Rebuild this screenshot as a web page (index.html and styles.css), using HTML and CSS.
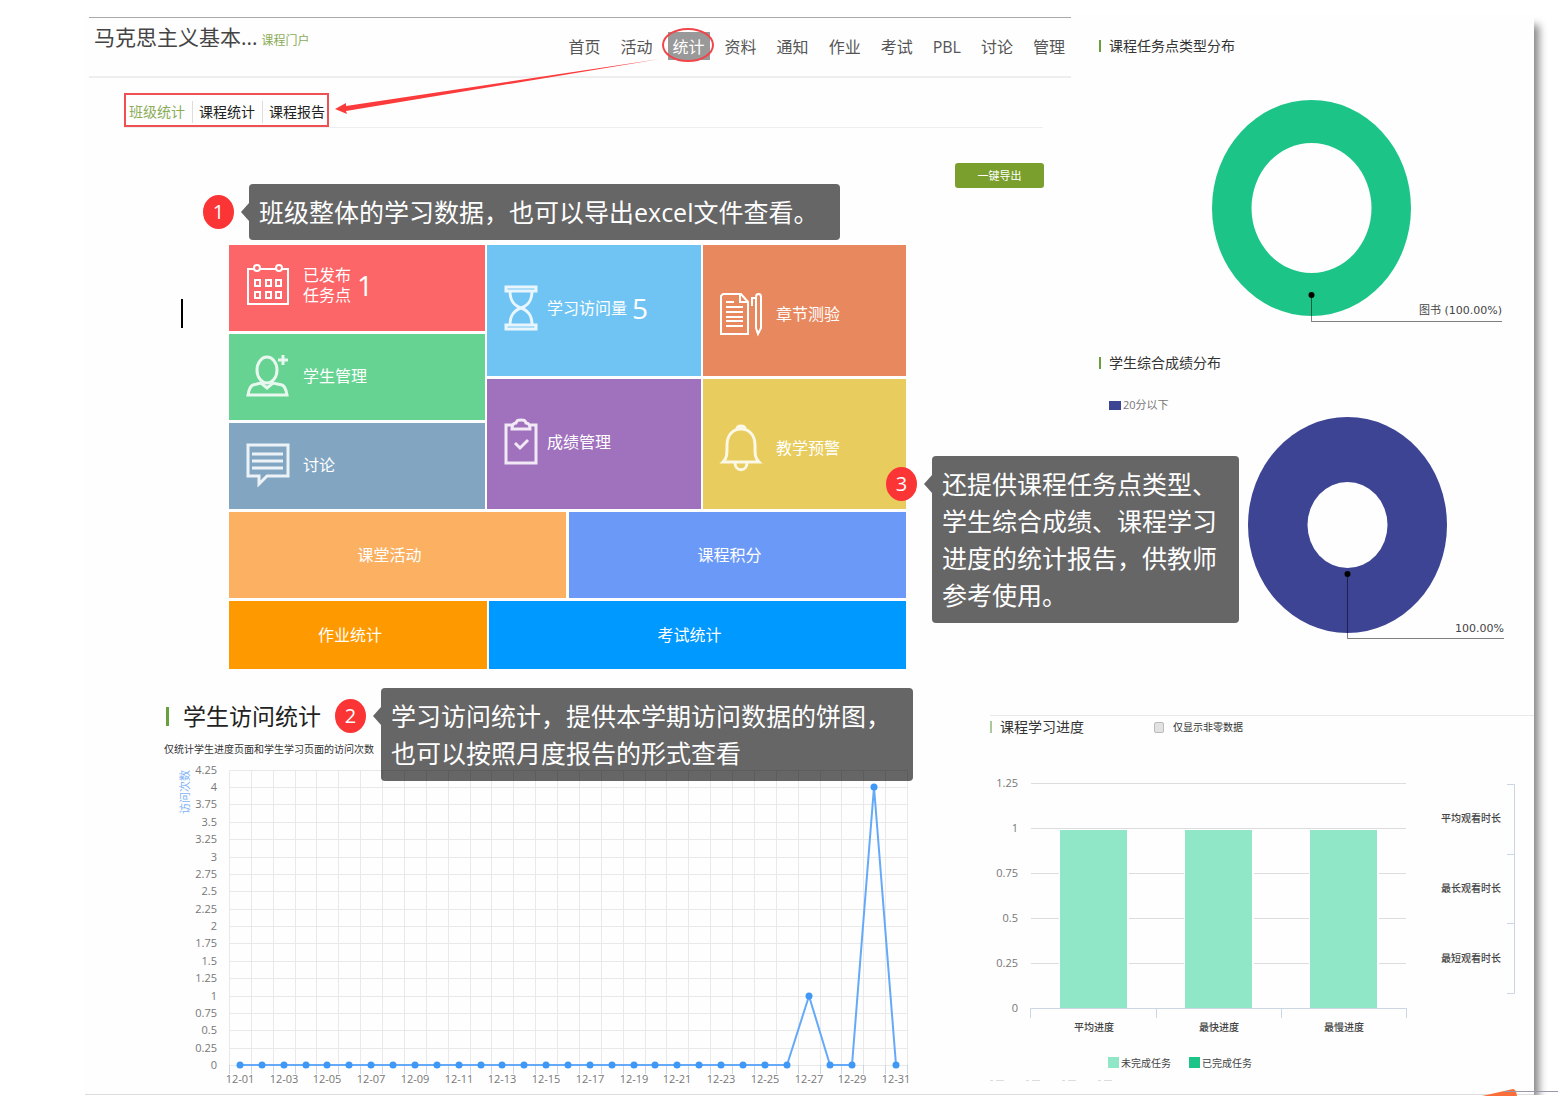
FILE: index.html
```html
<!DOCTYPE html>
<html lang="zh-CN">
<head>
<meta charset="utf-8">
<meta name="viewport" content="width=device-width, initial-scale=1">
<title>班级统计</title>
<link rel="stylesheet" href="styles.css">
</head>
<body>
<main class="slide">
  <div class="top">
    <section class="course">
      <header class="header">
        <h1 class="course-name">马克思主义基本...<a class="portal" href="#">课程门户</a></h1>
        <nav class="nav">
          <a href="#">首页</a>
          <a href="#">活动</a>
          <a href="#" class="active">统计</a>
          <a href="#">资料</a>
          <a href="#">通知</a>
          <a href="#">作业</a>
          <a href="#">考试</a>
          <a href="#">PBL</a>
          <a href="#">讨论</a>
          <a href="#">管理</a>
        </nav>
      </header>
      <div class="tabs-row">
        <nav class="tabs">
          <a href="#" class="current">班级统计</a>
          <a href="#">课程统计</a>
          <a href="#">课程报告</a>
        </nav>
      </div>
      <div class="actions"><button class="export" type="button">一键导出</button></div>
      <div class="board">
        <span class="caret"></span>
        <div class="tiles">
          <div class="stack">
            <a href="#" class="tile red">
              <svg class="icon" viewBox="0 0 42 42" width="42" height="42"><path d="M7 5H1v35h40V5h-6M13 5h16"/><circle cx="10" cy="4" r="3"/><circle cx="32" cy="4" r="3"/><path d="M8 16h5v6H8zM19 16h5v6h-5zM29 16h5v6h-5zM8 28h5v6H8zM19 28h5v6h-5zM29 28h5v6h-5z"/></svg>
              <span class="lines">已发布<br>任务点</span><b>1</b>
            </a>
            <a href="#" class="tile green">
              <svg class="icon" viewBox="0 0 42 42" width="42" height="42"><ellipse cx="20" cy="15" rx="10" ry="13"/><path d="M36 0v10M31 5h10M1 40c1-6 2-9 5-10l8-2 6 5 6-5 9 2c3 1 4 4 5 10z"/></svg>
              <span>学生管理</span>
            </a>
            <a href="#" class="tile steel">
              <svg class="icon" viewBox="0 0 42 42" width="42" height="42"><path d="M1 1h40v31H20l-8 8v-8H1zM5 10h31M5 17h31M5 24h31"/></svg>
              <span>讨论</span>
            </a>
          </div>
          <div class="stack middle">
            <a href="#" class="tile sky">
              <svg class="icon" viewBox="0 0 32 44" width="32" height="44"><path d="M1 1h30v4H1zM1 39h30v4H1zM5 5c0 9 3 14 11 17C8 25 5 30 5 39M27 5c0 9-3 14-11 17 8 3 11 8 11 17"/></svg>
              <span>学习访问量</span><b>5</b>
            </a>
            <a href="#" class="tile purple">
              <svg class="icon" viewBox="0 0 32 46" width="32" height="46"><path d="M7 6H1v38h30V6h-6M7 10c0-5 2-6 4-6 1-3 2-3 5-3s4 0 5 3c3 0 4 2 4 6zM10 24l5 5 8-8"/></svg>
              <span>成绩管理</span>
            </a>
          </div>
          <div class="stack right">
            <a href="#" class="tile coral">
              <svg class="icon" viewBox="0 0 42 42" width="42" height="42"><path d="M3 1h18l7 8v32H1V3zM20 1v8h8M6 9h8M6 14h17M6 19h17M6 24h17M6 28h17M6 33h17M36 4c0-4 5-4 5 0v31l-3 6-2-6zM36 5h-4v8"/></svg>
              <span>章节测验</span>
            </a>
            <a href="#" class="tile gold">
              <svg class="icon" viewBox="0 0 42 46" width="42" height="46"><path d="M3 37h36c-4-4-4-7-4-17 0-9-5-16-14-16S7 11 7 20c0 10 0 13-4 17zM15 38c0 9 12 9 12 0M17 4c0-4 8-4 8 0"/></svg>
              <span>教学预警</span>
            </a>
          </div>
          <a href="#" class="tile wide apricot">课堂活动</a>
          <a href="#" class="tile wide periwinkle">课程积分</a>
          <a href="#" class="tile wide orange">作业统计</a>
          <a href="#" class="tile wide azure">考试统计</a>
        </div>
      </div>
    </section>
    <section class="reports">
      <h2 class="heading">课程任务点类型分布</h2>
      <svg class="chart" viewBox="0 0 463 280">
        <ellipse cx="240.500" cy="148" rx="99.500" ry="108" fill="#1cc587"/>
        <ellipse cx="240.500" cy="148" rx="60" ry="65" fill="#fefefe"/>
        <path class="leader" d="M240.500 235v26.500H431"/>
        <circle cx="240.500" cy="235" r="3"/>
        <text class="value" x="431" y="254" text-anchor="end">图书 (100.00%)</text>
      </svg>
      <h2 class="heading">学生综合成绩分布</h2>
      <p class="score-legend"><i></i>20分以下</p>
      <svg class="chart" viewBox="0 0 463 240">
        <ellipse cx="276.500" cy="113" rx="99.500" ry="108" fill="#3d4493"/>
        <ellipse cx="276.500" cy="113" rx="40" ry="43" fill="#fefefe"/>
        <path class="leader" d="M276.500 162v64.500H433"/>
        <circle cx="276.500" cy="162" r="3"/>
        <text class="value" x="433" y="220" text-anchor="end">100.00%</text>
      </svg>
    </section>
  </div>
  <div class="bottom">
    <section class="visits">
      <h2 class="heading large">学生访问统计</h2>
      <p class="hint">仅统计学生进度页面和学生学习页面的访问次数</p>
      <svg id="visits" class="chart" viewBox="0 0 748 334"></svg>
    </section>
    <section class="progress">
      <div class="progress-head">
        <h2 class="heading">课程学习进度</h2>
        <label class="filter"><input type="checkbox">仅显示非零数据</label>
      </div>
      <svg id="progress" class="chart" viewBox="0 0 544 334"></svg>
    </section>
  </div>

  <svg class="pointer" viewBox="0 0 600 110" width="600" height="110">
    <ellipse cx="563" cy="31" rx="25" ry="16" fill="none" stroke="#f0464a" stroke-width="2"/>
    <path fill="#fb3b3b" d="M210 95l11-6v3L535 45 221 97l1 3z"/>
  </svg>
  <aside class="note note-1"><span class="badge">1</span><p>班级整体的学习数据，也可以导出excel文件查看。</p></aside>
  <aside class="note note-2"><span class="badge">2</span><p>学习访问统计，提供本学期访问数据的饼图，<br>也可以按照月度报告的形式查看</p></aside>
  <aside class="note note-3"><span class="badge">3</span><p>还提供课程任务点类型、<br>学生综合成绩、课程学习<br>进度的统计报告，供教师<br>参考使用。</p></aside>
</main>
<svg class="corner" viewBox="0 0 76 8" width="76" height="8"><path fill="#fb6e3a" d="M0 8l31-7q3 0 4 7z"/><path stroke="#99a" d="M22 3.500H76"/></svg>
<script src="script.js"></script>
</body>
</html>
```
FILE: styles.css
```css
* { box-sizing: border-box; }
body {
  margin: 0;
  background: #fff;
  color: #333;
  font: 14px/20px "Open Sans", "Noto Sans CJK SC", sans-serif;
}
h1, h2, p { margin: 0; font-weight: 400; }
a { color: inherit; text-decoration: none; }

.slide {
  position: relative;
  margin: 14px 24px 0 85px;
  padding: 3px 0 0 4px;
  background: #fefefe;
  border-bottom: 1px solid #ddd;
  box-shadow: 8px 8px 8px -3px #888;
}
.top { display: grid; grid-template-columns: 982fr 463fr; min-height: 683px; }
.bottom { display: grid; grid-template-columns: 901fr 544fr; }

.header {
  display: flex;
  justify-content: space-between;
  height: 61px;
  border-top: 1px solid #aaa;
  border-bottom: 2px solid #eee;
}
.course-name { padding: 4px 0 0 5px; font-size: 21px; line-height: 30px; color: #444; }
.portal { margin-left: 4px; font-size: 12px; color: #8bac58; }
.nav { display: flex; gap: 10px; padding: 14px 1px 0 0; font-size: 16px; color: #555; }
.nav a { height: 28px; padding: 0 5px; line-height: 30px; }
.nav .active { background: #999; color: #fff; }

.tabs-row { display: flex; margin: 15px 28px 0 35px; border-bottom: 1px solid #eee; }
.tabs { display: flex; padding: 6px 2px 2px 3px; border: 2px solid #ee5053; line-height: 22px; color: #222; }
.tabs a { padding-right: 7px; }
.tabs a + a { padding-left: 6px; border-left: 1px solid #ddd; }
.tabs a:last-child { padding-right: 0; }
.tabs .current { color: #8bac58; }

.actions { display: flex; justify-content: flex-end; padding: 35px 27px 57px 0; }
.export {
  width: 89px;
  height: 25px;
  border: 0;
  border-radius: 3px;
  background: #7a9f2d;
  color: #fff;
  font: 11px/20px "Open Sans", "Noto Sans CJK SC", sans-serif;
}

.board { display: flex; padding: 0 165px 0 92px; }
.caret { width: 2px; height: 29px; margin: 54px 46px 0 0; background: #000; }
.tiles { flex: 1; display: grid; grid-template-columns: repeat(677, minmax(0, 1fr)); row-gap: 3px; }
.stack { display: grid; grid-auto-rows: minmax(0, 1fr); gap: 3px; height: 264px; grid-column: 1 / 257; }
.stack.middle { grid-column: 259 / 473; }
.stack.right { grid-column: 475 / 678; }
.tile { display: flex; align-items: center; gap: 14px; padding: 0 18px 2px; color: #fff; font-size: 16px; }
.tile b { margin-left: -8px; font-size: 28px; font-weight: 400; }
.tile.red { padding-bottom: 6px; }
.tile .lines { line-height: 20px; }
.middle .tile { gap: 10px; padding-bottom: 4px; }
.middle .tile b { margin-left: -5px; }
.right .tile { padding: 8px 17px 0; }
.icon { flex: none; fill: none; stroke: #fff; stroke-width: 3; opacity: .85; overflow: visible; }
.coral .icon, .red .icon { stroke-width: 2; opacity: 1; }
.wide { justify-content: center; height: 86px; padding: 0 16px 0 0; }
.red { background: #fc6668; }
.green { background: #67d393; }
.steel { background: #82a6c2; }
.sky { background: #70c4f4; }
.purple { background: #a071bd; }
.coral { background: #e8885e; }
.gold { background: #e8cd5e; }
.apricot { grid-column: 1 / 338; background: #fbb062; }
.periwinkle { grid-column: 341 / 678; background: #6b99f7; }
.orange { grid-column: 1 / 259; height: 68px; background: #ff9900; }
.azure { grid-column: 261 / 678; height: 68px; background: #0099ff; }

.heading { display: flex; align-items: center; gap: 8px; font-size: 14px; line-height: 22px; color: #333; }
.heading::before { content: ""; width: 2px; height: 12px; background: #67a03c; }
.heading.large { gap: 14px; font-size: 23px; line-height: 32px; color: #222; }
.heading.large::before { width: 3px; height: 19px; }
.chart { display: block; width: 100%; height: auto; overflow: visible; }

.reports { padding-top: 18px; }
.reports .heading { padding-left: 28px; }
.reports .chart { margin: 3px 0 12px; }
.score-legend { display: flex; align-items: center; gap: 2px; padding: 21px 0 0 38px; font-size: 11px; line-height: 20px; color: #777; }
.score-legend i { width: 12px; height: 9px; background: #3d4493; }
.reports .score-legend + .chart { margin: -3px 0 0; }

.visits { padding: 0 78px 0 75px; }
.visits .heading { padding-left: 2px; }
.hint { padding-top: 7px; font-size: 10px; line-height: 21px; }
.progress { margin-top: 15px; border-top: 1px solid #e8e8e8; }
.progress-head { display: flex; align-items: flex-start; gap: 70px; height: 44px; }
.progress .heading::before { background: #a9c99a; }
.filter { display: flex; align-items: center; gap: 9px; height: 22px; font-size: 10px; }
.filter input {
  appearance: none;
  width: 10px;
  height: 11px;
  margin: 0;
  border: 1px solid #bbb;
  border-radius: 2px;
  background: #e2e2e2;
}

.chart text { font-size: 11px; fill: #777; }
.chart text.value { font-family: "DejaVu Sans", "Noto Sans CJK SC", sans-serif; fill: #444; }
.chart text.cat { font-size: 10px; font-weight: 500; fill: #444; }
.chart text.key { font-size: 10px; fill: #444; }
.chart text.axis-title { fill: #7fb3f7; }
.leader { fill: none; stroke: #000; stroke-opacity: .5; }
.grid { fill: none; stroke: #e9e9e9; }
.grid.dark { stroke: #ddd; }
.axis { fill: none; stroke: #ccd6e2; }
.series { fill: none; stroke: #64aaf8; stroke-width: 2; }
.dot { fill: #3f98f5; }

.pointer { position: absolute; left: 40px; top: 0; }
.note { position: absolute; display: flex; align-items: flex-start; gap: 15px; }
.note-1 { left: 118px; top: 170px; }
.note-2 { left: 250px; top: 674px; }
.note-3 { left: 801px; top: 442px; }
.badge {
  width: 31px;
  height: 34px;
  margin-top: 11px;
  border-radius: 50%;
  background: #fb3535;
  color: #fff;
  font-size: 20px;
  line-height: 33px;
  text-align: center;
}
.note p {
  position: relative;
  padding: 10px 22px 9px 10px;
  border-radius: 4px;
  background: rgba(0, 0, 0, .6);
  color: #fff;
  font-size: 25px;
  line-height: 37px;
  white-space: nowrap;
}
.note p::before {
  content: "";
  position: absolute;
  left: -8px;
  top: 19px;
  border: solid transparent;
  border-width: 9px 8px 9px 0;
  border-right-color: rgba(0, 0, 0, .6);
}
.corner { position: absolute; right: 0; bottom: 0; }
```
FILE: script.js
```js
const el = (name, attrs, text) => {
  const node = document.createElementNS("http://www.w3.org/2000/svg", name);
  for (const key in attrs) node.setAttribute(key, attrs[key]);
  if (text !== undefined) node.textContent = text;
  return node;
};

function drawVisits(svg) {
  const left = 65, right = 743, base = 305, days = 31;
  const scale = v => Math.round(base - v * 69.5);
  const edge = i => Math.round(left + (right - left) * i / days);
  const mid = i => Math.round(left + (right - left) * (i + 0.5) / days);
  const values = Array(days).fill(0);
  values[26] = 1;
  values[29] = 4;

  for (let v = 0; v <= 4.25; v += 0.25) {
    svg.append(el("path", { class: "grid", d: `M${left} ${scale(v) + 0.5}H${right}` }));
    svg.append(el("text", { x: 53, y: scale(v) + 4, "text-anchor": "end" }, v));
  }
  for (let i = 0; i <= days; i++) {
    svg.append(el("path", { class: "grid", d: `M${edge(i) + 0.5} ${scale(4.25)}V${base}` }));
    svg.append(el("path", { class: "axis", d: `M${edge(i) + 0.5} ${base}v9` }));
  }
  svg.append(el("polyline", { class: "series", points: values.map((v, i) => `${mid(i)},${scale(v)}`).join(" ") }));
  values.forEach((v, i) => {
    svg.append(el("circle", { class: "dot", cx: mid(i), cy: scale(v), r: 3.5 }));
    if (i % 2 === 0) {
      svg.append(el("text", { x: mid(i), y: 323, "text-anchor": "middle" }, "12-" + String(i + 1).padStart(2, "0")));
    }
  });
  svg.append(el("text", { class: "axis-title", transform: "translate(25 54) rotate(-90)" }, "访问次数"));
}

function drawProgress(svg) {
  const left = 41, right = 416, base = 248;
  [0, 0.25, 0.5, 0.75, 1, 1.25].forEach((v, i) => {
    const y = base - i * 45;
    svg.append(el("path", { class: v ? "grid dark" : "axis", d: `M${left} ${y + 0.5}H${right}` }));
    svg.append(el("text", { x: 28, y: y + 4, "text-anchor": "end" }, v));
  });
  ["平均进度", "最快进度", "最慢进度"].forEach((name, i) => {
    const x = left + i * 125;
    svg.append(el("rect", { x: x + 28, y: 69, width: 70, height: 179, fill: "#fff" }));
    svg.append(el("rect", { x: x + 29, y: 70, width: 67, height: 178, fill: "#90e7c7" }));
    svg.append(el("text", { class: "cat", x: x + 63, y: 271, "text-anchor": "middle" }, name));
  });
  svg.append(el("path", { class: "axis", d: "M40.5 258v-9.5H416.5v9.5M166.5 248v10M291.500 248v10" }));
  svg.append(el("path", { class: "axis", d: "M517 24.500h7.500v209h-7.500M517 94.500h7M517 163.500h7" }));
  ["平均观看时长", "最长观看时长", "最短观看时长"].forEach((name, i) => {
    svg.append(el("text", { class: "cat", x: 511, y: 62 + i * 70, "text-anchor": "end" }, name));
  });
  [["未完成任务", "#90e7c7", 118], ["已完成任务", "#1cc587", 199]].forEach(([name, fill, x]) => {
    svg.append(el("rect", { x, y: 297, width: 11, height: 11, fill }));
    svg.append(el("text", { class: "key", x: x + 13, y: 307 }, name));
  });
  svg.append(el("path", { class: "grid dark", "stroke-dasharray": "3 3 8 22", d: "M0 320.500h134" }));
}

drawVisits(document.getElementById("visits"));
drawProgress(document.getElementById("progress"));
```
